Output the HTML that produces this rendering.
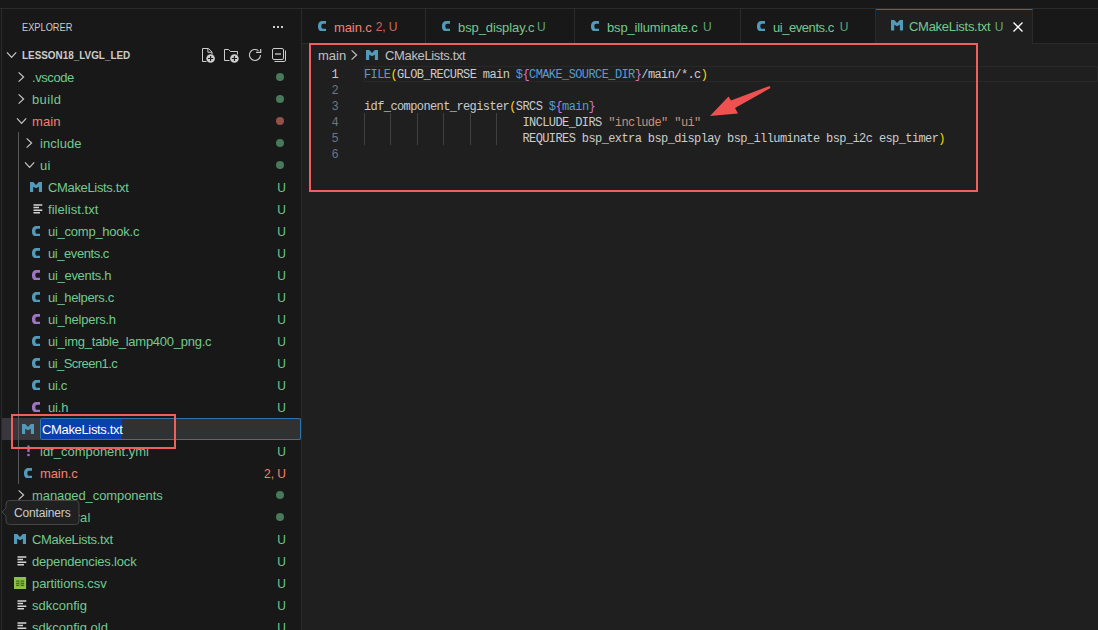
<!DOCTYPE html>
<html><head><meta charset="utf-8">
<style>
*{margin:0;padding:0;box-sizing:border-box}
html,body{width:1098px;height:630px;overflow:hidden;background:#181818;font-family:"Liberation Sans",sans-serif;position:relative}
.abs{position:absolute}
.ic{position:absolute;line-height:0}
.ic svg{display:block}
.row{position:absolute;left:2px;width:299px;height:22px;font-size:13px;white-space:nowrap}
.row .lab{position:absolute;top:1px;line-height:22px;letter-spacing:-0.2px}
.dot{position:absolute;left:274px;top:7px;width:8px;height:8px;border-radius:50%}
.deco{position:absolute;right:15px;top:1px;line-height:22px;font-size:12px}
.sel{background:#37373d}
.inp{position:absolute;left:38px;top:0;width:261px;height:22px;background:#313131;border:1px solid #2d74b0;border-radius:2px}
.seltext{position:absolute;left:0;top:0;height:20px;line-height:22px;background:#0a40ac;color:#ffffff;padding:0 0 0 1px;letter-spacing:-0.34px}
.ln{position:absolute;left:299px;width:39px;text-align:right;font-family:"Liberation Mono",monospace;font-size:12px;letter-spacing:-0.6px;line-height:17px;height:16px}
.cl{position:absolute;left:364px;font-family:"Liberation Mono",monospace;font-size:12px;letter-spacing:-0.6px;line-height:17px;height:16px;white-space:pre}
.guide{width:1px;background:#404040}
.tab{position:absolute;top:9px;height:35px;background:#181818;border-right:1px solid #2b2b2b;border-bottom:1px solid #2b2b2b;font-size:13px;white-space:nowrap}
.tlab{position:absolute;left:32px;top:1px;line-height:35px;letter-spacing:-0.1px}
.tdec{font-size:12px;opacity:0.8}
.box{position:absolute;border:2px solid #ee5f5f}
</style></head><body>
<div class="abs" style="left:0;top:8px;width:1098px;height:1px;background:#2b2b2b"></div>
<div class="abs" style="left:1px;top:9px;width:1px;height:621px;background:#2b2b2b"></div>
<div class="abs" style="left:301px;top:9px;width:1px;height:621px;background:#2b2b2b"></div>
<!-- sidebar header -->
<div class="abs" style="left:22px;top:19px;font-size:11px;line-height:16px;color:#cccccc;transform:scaleX(0.84);transform-origin:0 0">EXPLORER</div>
<svg class="abs" style="left:270px;top:24px" width="16" height="6"><rect x="3" y="2" width="2" height="2" fill="#cccccc"/><rect x="7" y="2" width="2" height="2" fill="#cccccc"/><rect x="11" y="2" width="2" height="2" fill="#cccccc"/></svg>
<div class="row" style="top:44px">
 <span class="ic" style="left:2px;top:3px"><svg width="16" height="16" viewBox="0 0 16 16"><path d="M3 5.3L7.6 10.3 12.2 5.3" fill="none" stroke="#c5c5c5" stroke-width="1.2"/></svg></span>
 <span class="lab" style="top:0;left:20px;font-weight:bold;font-size:11px;color:#cccccc;transform:scaleX(0.9);transform-origin:0 0;letter-spacing:0">LESSON18_LVGL_LED</span>
</div>
<svg class="abs" style="left:196px;top:44px" width="96" height="22" viewBox="196 44 96 22">
<g fill="none" stroke="#cccccc" stroke-width="1">
<path d="M206.5 61.5H202.5V48.5H208.5L212 52V54.5"/>
<path d="M207.9 48.5V52.3H211.7"/>
<path d="M229.5 60.5H224.5V49.5H228.5L230.5 51.5H237.5V54.5"/>
<path d="M258.5 50.7A5.5 5.5 0 1 0 260.5 55" stroke-width="1.1"/>
<path d="M256.1 52.4H260.7V49.1" stroke-width="1.2"/>
<rect x="272.5" y="48.5" width="11" height="11" rx="1.5"/>
<path d="M275 54H281" stroke-width="1.3"/>
<path d="M285.5 50.5V60A1.5 1.5 0 0 1 284 61.5H274.5"/>
</g>
<circle cx="210.6" cy="58.5" r="4.3" fill="#cccccc"/>
<circle cx="234.4" cy="58.5" r="4.3" fill="#cccccc"/>
<path d="M208 58.5H213.2M210.6 56V61" stroke="#181818" stroke-width="1.1"/>
<path d="M231.8 58.5H237M234.4 56V61" stroke="#181818" stroke-width="1.1"/>
</svg>
<div class="row" style="top:66px"><span class="ic" style="left:12px;top:3px"><svg width="16" height="16" viewBox="0 0 16 16"><path d="M4.6 3.4L9.6 8 4.6 12.6" fill="none" stroke="#c5c5c5" stroke-width="1.2"/></svg></span><span class="lab" style="left:30px;color:#73c991;letter-spacing:-0.43px">.vscode</span><span class="dot" style="background:#467a58"></span></div>
<div class="row" style="top:88px"><span class="ic" style="left:12px;top:3px"><svg width="16" height="16" viewBox="0 0 16 16"><path d="M4.6 3.4L9.6 8 4.6 12.6" fill="none" stroke="#c5c5c5" stroke-width="1.2"/></svg></span><span class="lab" style="left:30px;color:#73c991;letter-spacing:0.35px">build</span><span class="dot" style="background:#467a58"></span></div>
<div class="row" style="top:110px"><span class="ic" style="left:12px;top:3px"><svg width="16" height="16" viewBox="0 0 16 16"><path d="M3 5.3L7.6 10.3 12.2 5.3" fill="none" stroke="#c5c5c5" stroke-width="1.2"/></svg></span><span class="lab" style="left:30px;color:#f88070;letter-spacing:0.13px">main</span><span class="dot" style="background:#935149"></span></div>
<div class="row" style="top:132px"><span class="ic" style="left:20px;top:3px"><svg width="16" height="16" viewBox="0 0 16 16"><path d="M4.6 3.4L9.6 8 4.6 12.6" fill="none" stroke="#c5c5c5" stroke-width="1.2"/></svg></span><span class="lab" style="left:38px;color:#73c991;letter-spacing:0.03px">include</span><span class="dot" style="background:#467a58"></span></div>
<div class="row" style="top:154px"><span class="ic" style="left:20px;top:3px"><svg width="16" height="16" viewBox="0 0 16 16"><path d="M3 5.3L7.6 10.3 12.2 5.3" fill="none" stroke="#c5c5c5" stroke-width="1.2"/></svg></span><span class="lab" style="left:38px;color:#73c991;letter-spacing:0.2px">ui</span><span class="dot" style="background:#467a58"></span></div>
<div class="row" style="top:176px"><span class="ic" style="left:27.8px;top:5.5px"><svg width="12.1" height="10.6" viewBox="0 0 12.1 10.6"><path d="M0 0H3.3L6.05 2.9 8.8 0H12.1V10.6H8.9V4.8L6.05 6.3 3.2 4.8V10.6H0Z" fill="#519aba"/></svg></span><span class="lab" style="left:46px;color:#73c991;letter-spacing:-0.34px">CMakeLists.txt</span><span class="deco" style="color:#73c991">U</span></div>
<div class="row" style="top:198px"><span class="ic" style="left:30.799999999999997px;top:6px"><svg width="10" height="10" viewBox="0 0 10 10"><path d="M0.5 1H9.3M0.5 3.5H6M0.5 6.2H9.3M0.5 8.8H7" stroke="#d4d4d4" stroke-width="1.4"/></svg></span><span class="lab" style="left:46px;color:#73c991;letter-spacing:0.05px">filelist.txt</span><span class="deco" style="color:#73c991">U</span></div>
<div class="row" style="top:220px"><span class="ic" style="left:29.7px;top:5.6px"><svg width="8.6" height="10.5" viewBox="0 0 8.6 10.3" preserveAspectRatio="none"><path d="M8.6 0H4.3C1.9 0 0 2 0 4.5V5.8C0 8.3 1.9 10.3 4.3 10.3H8.6V7.7H5.2C4.2 7.7 3.4 6.9 3.4 5.9V4.4C3.4 3.4 4.2 2.6 5.2 2.6H8.6Z" fill="#519aba"/></svg></span><span class="lab" style="left:46px;color:#73c991;letter-spacing:-0.25px">ui_comp_hook.c</span><span class="deco" style="color:#73c991">U</span></div>
<div class="row" style="top:242px"><span class="ic" style="left:29.7px;top:5.6px"><svg width="8.6" height="10.5" viewBox="0 0 8.6 10.3" preserveAspectRatio="none"><path d="M8.6 0H4.3C1.9 0 0 2 0 4.5V5.8C0 8.3 1.9 10.3 4.3 10.3H8.6V7.7H5.2C4.2 7.7 3.4 6.9 3.4 5.9V4.4C3.4 3.4 4.2 2.6 5.2 2.6H8.6Z" fill="#519aba"/></svg></span><span class="lab" style="left:46px;color:#73c991;letter-spacing:-0.44px">ui_events.c</span><span class="deco" style="color:#73c991">U</span></div>
<div class="row" style="top:264px"><span class="ic" style="left:29.7px;top:5.6px"><svg width="8.6" height="10.5" viewBox="0 0 8.6 10.3" preserveAspectRatio="none"><path d="M8.6 0H4.3C1.9 0 0 2 0 4.5V5.8C0 8.3 1.9 10.3 4.3 10.3H8.6V7.7H5.2C4.2 7.7 3.4 6.9 3.4 5.9V4.4C3.4 3.4 4.2 2.6 5.2 2.6H8.6Z" fill="#a074c4"/></svg></span><span class="lab" style="left:46px;color:#73c991;letter-spacing:-0.3px">ui_events.h</span><span class="deco" style="color:#73c991">U</span></div>
<div class="row" style="top:286px"><span class="ic" style="left:29.7px;top:5.6px"><svg width="8.6" height="10.5" viewBox="0 0 8.6 10.3" preserveAspectRatio="none"><path d="M8.6 0H4.3C1.9 0 0 2 0 4.5V5.8C0 8.3 1.9 10.3 4.3 10.3H8.6V7.7H5.2C4.2 7.7 3.4 6.9 3.4 5.9V4.4C3.4 3.4 4.2 2.6 5.2 2.6H8.6Z" fill="#519aba"/></svg></span><span class="lab" style="left:46px;color:#73c991;letter-spacing:-0.36px">ui_helpers.c</span><span class="deco" style="color:#73c991">U</span></div>
<div class="row" style="top:308px"><span class="ic" style="left:29.7px;top:5.6px"><svg width="8.6" height="10.5" viewBox="0 0 8.6 10.3" preserveAspectRatio="none"><path d="M8.6 0H4.3C1.9 0 0 2 0 4.5V5.8C0 8.3 1.9 10.3 4.3 10.3H8.6V7.7H5.2C4.2 7.7 3.4 6.9 3.4 5.9V4.4C3.4 3.4 4.2 2.6 5.2 2.6H8.6Z" fill="#a074c4"/></svg></span><span class="lab" style="left:46px;color:#73c991;letter-spacing:-0.25px">ui_helpers.h</span><span class="deco" style="color:#73c991">U</span></div>
<div class="row" style="top:330px"><span class="ic" style="left:29.7px;top:5.6px"><svg width="8.6" height="10.5" viewBox="0 0 8.6 10.3" preserveAspectRatio="none"><path d="M8.6 0H4.3C1.9 0 0 2 0 4.5V5.8C0 8.3 1.9 10.3 4.3 10.3H8.6V7.7H5.2C4.2 7.7 3.4 6.9 3.4 5.9V4.4C3.4 3.4 4.2 2.6 5.2 2.6H8.6Z" fill="#519aba"/></svg></span><span class="lab" style="left:46px;color:#73c991;letter-spacing:-0.25px">ui_img_table_lamp400_png.c</span><span class="deco" style="color:#73c991">U</span></div>
<div class="row" style="top:352px"><span class="ic" style="left:29.7px;top:5.6px"><svg width="8.6" height="10.5" viewBox="0 0 8.6 10.3" preserveAspectRatio="none"><path d="M8.6 0H4.3C1.9 0 0 2 0 4.5V5.8C0 8.3 1.9 10.3 4.3 10.3H8.6V7.7H5.2C4.2 7.7 3.4 6.9 3.4 5.9V4.4C3.4 3.4 4.2 2.6 5.2 2.6H8.6Z" fill="#519aba"/></svg></span><span class="lab" style="left:46px;color:#73c991;letter-spacing:-0.55px">ui_Screen1.c</span><span class="deco" style="color:#73c991">U</span></div>
<div class="row" style="top:374px"><span class="ic" style="left:29.7px;top:5.6px"><svg width="8.6" height="10.5" viewBox="0 0 8.6 10.3" preserveAspectRatio="none"><path d="M8.6 0H4.3C1.9 0 0 2 0 4.5V5.8C0 8.3 1.9 10.3 4.3 10.3H8.6V7.7H5.2C4.2 7.7 3.4 6.9 3.4 5.9V4.4C3.4 3.4 4.2 2.6 5.2 2.6H8.6Z" fill="#519aba"/></svg></span><span class="lab" style="left:46px;color:#73c991;letter-spacing:-0.3px">ui.c</span><span class="deco" style="color:#73c991">U</span></div>
<div class="row" style="top:396px"><span class="ic" style="left:29.7px;top:5.6px"><svg width="8.6" height="10.5" viewBox="0 0 8.6 10.3" preserveAspectRatio="none"><path d="M8.6 0H4.3C1.9 0 0 2 0 4.5V5.8C0 8.3 1.9 10.3 4.3 10.3H8.6V7.7H5.2C4.2 7.7 3.4 6.9 3.4 5.9V4.4C3.4 3.4 4.2 2.6 5.2 2.6H8.6Z" fill="#a074c4"/></svg></span><span class="lab" style="left:46px;color:#73c991;letter-spacing:-0.17px">ui.h</span><span class="deco" style="color:#73c991">U</span></div>
<div class="row sel" style="top:418px"><span class="ic" style="left:19.8px;top:5.5px"><svg width="12.1" height="10.6" viewBox="0 0 12.1 10.6"><path d="M0 0H3.3L6.05 2.9 8.8 0H12.1V10.6H8.9V4.8L6.05 6.3 3.2 4.8V10.6H0Z" fill="#519aba"/></svg></span><span class="inp"><span class="seltext">CMakeLists.txt</span></span></div>
<div class="row" style="top:440px"><span class="ic" style="left:23.5px;top:5px"><svg width="5" height="12" viewBox="0 0 5 12"><path d="M2.5 0.5V7" stroke="#a074c4" stroke-width="2.2"/><circle cx="2.5" cy="10" r="1.3" fill="#a074c4"/></svg></span><span class="lab" style="left:38px;color:#73c991;letter-spacing:-0.01px">idf_component.yml</span><span class="deco" style="color:#73c991">U</span></div>
<div class="row" style="top:462px"><span class="ic" style="left:21.7px;top:5.6px"><svg width="8.6" height="10.5" viewBox="0 0 8.6 10.3" preserveAspectRatio="none"><path d="M8.6 0H4.3C1.9 0 0 2 0 4.5V5.8C0 8.3 1.9 10.3 4.3 10.3H8.6V7.7H5.2C4.2 7.7 3.4 6.9 3.4 5.9V4.4C3.4 3.4 4.2 2.6 5.2 2.6H8.6Z" fill="#519aba"/></svg></span><span class="lab" style="left:38px;color:#f88070;letter-spacing:-0.1px">main.c</span><span class="deco" style="color:#f88070">2, U</span></div>
<div class="row" style="top:484px"><span class="ic" style="left:12px;top:3px"><svg width="16" height="16" viewBox="0 0 16 16"><path d="M4.6 3.4L9.6 8 4.6 12.6" fill="none" stroke="#c5c5c5" stroke-width="1.2"/></svg></span><span class="lab" style="left:30px;color:#73c991;letter-spacing:-0.09px">managed_components</span><span class="dot" style="background:#467a58"></span></div>
<div class="row" style="top:506px"><span class="ic" style="left:12px;top:3px"><svg width="16" height="16" viewBox="0 0 16 16"><path d="M4.6 3.4L9.6 8 4.6 12.6" fill="none" stroke="#c5c5c5" stroke-width="1.2"/></svg></span><span class="lab" style="left:30px;color:#73c991;letter-spacing:0.05px">peripheral</span><span class="dot" style="background:#467a58"></span></div>
<div class="row" style="top:528px"><span class="ic" style="left:11.8px;top:5.5px"><svg width="12.1" height="10.6" viewBox="0 0 12.1 10.6"><path d="M0 0H3.3L6.05 2.9 8.8 0H12.1V10.6H8.9V4.8L6.05 6.3 3.2 4.8V10.6H0Z" fill="#519aba"/></svg></span><span class="lab" style="left:30px;color:#73c991;letter-spacing:-0.32px">CMakeLists.txt</span><span class="deco" style="color:#73c991">U</span></div>
<div class="row" style="top:550px"><span class="ic" style="left:14.8px;top:6px"><svg width="10" height="10" viewBox="0 0 10 10"><path d="M0.5 1H9.3M0.5 3.5H6M0.5 6.2H9.3M0.5 8.8H7" stroke="#d4d4d4" stroke-width="1.4"/></svg></span><span class="lab" style="left:30px;color:#73c991;letter-spacing:-0.19px">dependencies.lock</span><span class="deco" style="color:#73c991">U</span></div>
<div class="row" style="top:572px"><span class="ic" style="left:11.899999999999999px;top:4.9px"><svg width="13" height="12" viewBox="0 0 13 12"><rect x="0" y="0" width="12.1" height="12.1" fill="#8dc149"/><rect x="2.2" y="3" width="7.9" height="6.2" fill="#74a63e"/><path d="M2.2 4.2H5M7 4.2H10.1M2.2 6.6H5M7 6.6H10.1M2.2 8.5H5M7 8.5H10.1" stroke="#3f6e1c" stroke-width="1"/></svg></span><span class="lab" style="left:30px;color:#73c991;letter-spacing:-0.09px">partitions.csv</span><span class="deco" style="color:#73c991">U</span></div>
<div class="row" style="top:594px"><span class="ic" style="left:14.8px;top:6px"><svg width="10" height="10" viewBox="0 0 10 10"><path d="M0.5 1H9.3M0.5 3.5H6M0.5 6.2H9.3M0.5 8.8H7" stroke="#d4d4d4" stroke-width="1.4"/></svg></span><span class="lab" style="left:30px;color:#73c991;letter-spacing:0.01px">sdkconfig</span><span class="deco" style="color:#73c991">U</span></div>
<div class="row" style="top:616px"><span class="ic" style="left:14.8px;top:6px"><svg width="10" height="10" viewBox="0 0 10 10"><path d="M0.5 1H9.3M0.5 3.5H6M0.5 6.2H9.3M0.5 8.8H7" stroke="#d4d4d4" stroke-width="1.4"/></svg></span><span class="lab" style="left:30px;color:#73c991;letter-spacing:0.0px">sdkconfig.old</span><span class="deco" style="color:#73c991">U</span></div>
<div class="abs" style="left:18px;top:132px;width:1px;height:352px;background:#585858"></div>
<!-- editor -->
<div class="abs" style="left:302px;top:44px;width:796px;height:586px;background:#1f1f1f"></div>
<div class="abs" style="left:1033px;top:9px;width:65px;height:35px;background:#181818;border-bottom:1px solid #2b2b2b"></div>
<div class="tab" style="left:302px;width:124px"><span class="ic" style="left:15.7px;top:11.8px"><svg width="8.6" height="10.5" viewBox="0 0 8.6 10.3" preserveAspectRatio="none"><path d="M8.6 0H4.3C1.9 0 0 2 0 4.5V5.8C0 8.3 1.9 10.3 4.3 10.3H8.6V7.7H5.2C4.2 7.7 3.4 6.9 3.4 5.9V4.4C3.4 3.4 4.2 2.6 5.2 2.6H8.6Z" fill="#519aba"/></svg></span><span class="tlab" style="color:#f88070;letter-spacing:-0.1px">main.c</span><span class="tlab tdec" style="left:73.7px;color:#f88070">2, U</span></div><div class="tab" style="left:426px;width:149px"><span class="ic" style="left:15.7px;top:11.8px"><svg width="8.6" height="10.5" viewBox="0 0 8.6 10.3" preserveAspectRatio="none"><path d="M8.6 0H4.3C1.9 0 0 2 0 4.5V5.8C0 8.3 1.9 10.3 4.3 10.3H8.6V7.7H5.2C4.2 7.7 3.4 6.9 3.4 5.9V4.4C3.4 3.4 4.2 2.6 5.2 2.6H8.6Z" fill="#519aba"/></svg></span><span class="tlab" style="color:#73c991;letter-spacing:-0.1px">bsp_display.c</span><span class="tlab tdec" style="left:110.9px;color:#73c991">U</span></div><div class="tab" style="left:575px;width:166px"><span class="ic" style="left:15.7px;top:11.8px"><svg width="8.6" height="10.5" viewBox="0 0 8.6 10.3" preserveAspectRatio="none"><path d="M8.6 0H4.3C1.9 0 0 2 0 4.5V5.8C0 8.3 1.9 10.3 4.3 10.3H8.6V7.7H5.2C4.2 7.7 3.4 6.9 3.4 5.9V4.4C3.4 3.4 4.2 2.6 5.2 2.6H8.6Z" fill="#519aba"/></svg></span><span class="tlab" style="color:#73c991;letter-spacing:-0.17px">bsp_illuminate.c</span><span class="tlab tdec" style="left:128.1px;color:#73c991">U</span></div><div class="tab" style="left:741px;width:135px"><span class="ic" style="left:15.7px;top:11.8px"><svg width="8.6" height="10.5" viewBox="0 0 8.6 10.3" preserveAspectRatio="none"><path d="M8.6 0H4.3C1.9 0 0 2 0 4.5V5.8C0 8.3 1.9 10.3 4.3 10.3H8.6V7.7H5.2C4.2 7.7 3.4 6.9 3.4 5.9V4.4C3.4 3.4 4.2 2.6 5.2 2.6H8.6Z" fill="#519aba"/></svg></span><span class="tlab" style="color:#73c991;letter-spacing:-0.45px">ui_events.c</span><span class="tlab tdec" style="left:98.7px;color:#73c991">U</span></div>
<div class="tab" style="left:876px;width:157px;background:#1f1f1f;border-bottom:none;border-top:1px solid #0078d4"><span class="ic" style="left:14.8px;top:10.3px"><svg width="12.1" height="10.6" viewBox="0 0 12.1 10.6"><path d="M0 0H3.3L6.05 2.9 8.8 0H12.1V10.6H8.9V4.8L6.05 6.3 3.2 4.8V10.6H0Z" fill="#519aba"/></svg></span><span class="tlab" style="left:33px;color:#73c991;top:0;line-height:34px;letter-spacing:-0.28px">CMakeLists.txt</span><span class="tlab tdec" style="left:118.8px;color:#73c991;top:0;line-height:34px">U</span><svg class="abs" style="left:136px;top:11px" width="12" height="12" viewBox="0 0 12 12"><path d="M1.5 1.5L10.5 10.5M10.5 1.5L1.5 10.5" stroke="#ffffff" stroke-width="1.3"/></svg></div>
<!-- breadcrumbs -->
<div class="abs" style="left:318px;top:48px;font-size:13px;line-height:16px;color:#c0c0c0">main</div>
<div class="abs" style="left:347px;top:47px;line-height:0"><svg width="16" height="16" viewBox="0 0 16 16"><path d="M4.6 3.4L9.6 8 4.6 12.6" fill="none" stroke="#c0c0c0" stroke-width="1.2"/></svg></div>
<div class="ic" style="left:365.8px;top:49.5px"><svg width="12.1" height="10.6" viewBox="0 0 12.1 10.6"><path d="M0 0H3.3L6.05 2.9 8.8 0H12.1V10.6H8.9V4.8L6.05 6.3 3.2 4.8V10.6H0Z" fill="#519aba"/></svg></div>
<div class="abs" style="left:385px;top:48px;font-size:13px;line-height:16px;color:#c0c0c0;letter-spacing:-0.35px">CMakeLists.txt</div>
<div class="abs" style="left:364px;top:66px;width:734px;height:16px;border:1px solid #282828"></div>
<div class="abs guide" style="left:364px;top:113px;height:32px"></div><div class="abs guide" style="left:390px;top:113px;height:32px"></div><div class="abs guide" style="left:417px;top:113px;height:32px"></div><div class="abs guide" style="left:443px;top:113px;height:32px"></div><div class="abs guide" style="left:470px;top:113px;height:32px"></div><div class="abs guide" style="left:496px;top:113px;height:32px"></div>
<div class="ln" style="top:67px;color:#cccccc">1</div><div class="cl" style="top:67px"><span style="color:#569cd6">FILE</span><span style="color:#ffd700">(</span><span style="color:#cccccc">GLOB_RECURSE main </span><span style="color:#569cd6">$</span><span style="color:#da70d6">{</span><span style="color:#569cd6">CMAKE_SOURCE_DIR</span><span style="color:#da70d6">}</span><span style="color:#cccccc">/main/*.c</span><span style="color:#ffd700">)</span></div>
<div class="ln" style="top:83px;color:#6e7681">2</div><div class="cl" style="top:83px"></div>
<div class="ln" style="top:99px;color:#6e7681">3</div><div class="cl" style="top:99px"><span style="color:#cccccc">idf_component_register</span><span style="color:#ffd700">(</span><span style="color:#cccccc">SRCS </span><span style="color:#569cd6">$</span><span style="color:#da70d6">{</span><span style="color:#569cd6">main</span><span style="color:#da70d6">}</span></div>
<div class="ln" style="top:115px;color:#6e7681">4</div><div class="cl" style="top:115px">                        <span style="color:#cccccc">INCLUDE_DIRS </span><span style="color:#ce9178">"include"</span> <span style="color:#ce9178">"ui"</span></div>
<div class="ln" style="top:131px;color:#6e7681">5</div><div class="cl" style="top:131px">                        <span style="color:#cccccc">REQUIRES bsp_extra bsp_display bsp_illuminate bsp_i2c esp_timer</span><span style="color:#ffd700">)</span></div>
<div class="ln" style="top:147px;color:#6e7681">6</div><div class="cl" style="top:147px"></div>

<!-- annotations -->
<div class="box" style="left:309px;top:43px;width:669px;height:149px"></div>
<div class="box" style="left:11px;top:414px;width:165px;height:35px"></div>
<svg class="abs" style="left:0;top:0" width="1098" height="630"><polygon points="710,116 738,113.5 735,108 770.5,88 769.5,86 731,100.5 728.5,96.5" fill="#ef5050"/></svg>
<!-- tooltip -->
<svg class="abs" style="left:0;top:498px" width="82" height="29" viewBox="0 498 82 29">
<path d="M9.5 500.5H75.5A3.5 3.5 0 0 1 79 504V521A3.5 3.5 0 0 1 75.5 524.5H9.5A3.5 3.5 0 0 1 6 521V516L2 512 6 508V504A3.5 3.5 0 0 1 9.5 500.5Z" fill="#202020" stroke="#454545" stroke-width="1"/>
</svg>
<div class="abs" style="left:14px;top:501px;font-size:12px;line-height:24px;color:#cccccc;letter-spacing:-0.15px">Containers</div>
</body></html>
